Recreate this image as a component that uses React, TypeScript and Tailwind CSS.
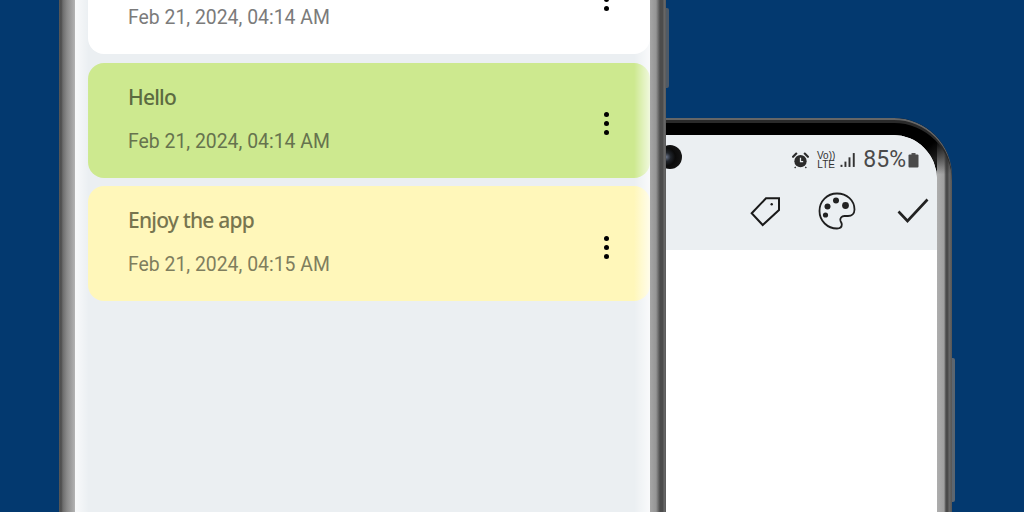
import React from "react";

function Kebab({ className }: { className: string }) {
  return (
    <div className={`flex w-[5px] flex-col gap-[4px] ${className}`}>
      <div className="h-[5px] w-[5px] rounded-full bg-black" />
      <div className="h-[5px] w-[5px] rounded-full bg-black" />
      <div className="h-[5px] w-[5px] rounded-full bg-black" />
    </div>
  );
}

function Card({ title, date, bg, titleCls, dateCls, className, kebab }: { title?: string; date: string; bg: string; titleCls: string; dateCls: string; className: string; kebab: string }) {
  return (
    <div className={`relative flex h-[115px] w-[562px] shrink-0 items-center justify-between rounded-[16px] pl-[40px] pr-[41px] ${bg} ${className}`}>
      <div className="flex flex-col pb-[4px]">
        <div className={`h-[28px] text-[21px] leading-[28px] font-medium tracking-[-0.8px] [font-family:'Noto_Sans',sans-serif] ${titleCls}`}>{title}</div>
        <div className={`mt-[19px] h-[24px] text-[19.4px] leading-[24px] [font-family:Roboto,sans-serif] ${dateCls}`}>{date}</div>
      </div>
      <Kebab className={kebab} />
    </div>
  );
}

function LeftPhone() {
  return (
    <div className="absolute left-[59px] top-[-120px] z-10 flex h-[760px] w-[607px] bg-[linear-gradient(90deg,#5a5a5a_0,#4c4c4c_2px,#6e6e6e_4px,#8a8a8a_8px,#a8a8a8_14px,#b4b4b4_16px,#b4b4b4_16px,#a6a6a6_591px,#959595_597px,#4c4c4c_601px,#4c4c4c_604px,#6a6a6a_605px,#5a5a5a_607px)] pl-[16px] pr-[16px]">
      <div className="relative flex h-full w-[575px] flex-col bg-[#ebeff2] pl-[13px] pt-[59px]">
        <Card date="Feb 21, 2024, 04:14 AM" bg="bg-white" titleCls="text-[#666]" dateCls="text-[#7b7b7b]" className="" kebab="mt-[6px]" />
        <Card title="Hello" date="Feb 21, 2024, 04:14 AM" bg="bg-[#cde98f]" titleCls="text-[#5c6b41]" dateCls="text-[#66734e]" className="mt-[9px]" kebab="mt-[6px]" />
        <Card title="Enjoy the app" date="Feb 21, 2024, 04:15 AM" bg="bg-[#fff7ba]" titleCls="text-[#77754f]" dateCls="text-[#7f7e5e]" className="mt-[8px]" kebab="mt-[7px]" />
        <div className="absolute inset-y-0 left-0 w-[14px] bg-[linear-gradient(90deg,rgba(255,255,255,0.65),rgba(255,255,255,0))]" />
        <div className="absolute inset-y-0 right-0 w-[16px] bg-[linear-gradient(270deg,rgba(255,255,255,0.7),rgba(255,255,255,0))]" />
      </div>
      <div className="absolute left-[607px] top-[128px] h-[80px] w-[3px] rounded-r-[2px] bg-[#4f5a66]" />
    </div>
  );
}

function Alarm() {
  return (
    <svg width="17" height="17" viewBox="0 0 16 16">
      <circle cx="8" cy="8.6" r="5.8" fill="#2b2b2b" />
      <path d="M1 4.5 L4 1.5 M15 4.5 L12 1.5" stroke="#2b2b2b" strokeWidth="2" strokeLinecap="round" />
      <path d="M3.5 14 L2.5 15 M12.5 14 L13.5 15" stroke="#2b2b2b" strokeWidth="1.3" />
      <path d="M8 5.5 V9 H10.5" stroke="#eaeef1" strokeWidth="1.2" fill="none" />
    </svg>
  );
}

function Signal() {
  return (
    <svg width="16" height="16" viewBox="0 0 15 15" fill="#333">
      <rect x="0.5" y="12" width="1.8" height="2" />
      <rect x="4.2" y="9" width="1.8" height="5" />
      <rect x="8" y="5" width="1.8" height="9" />
      <rect x="12" y="1" width="1.8" height="13" />
    </svg>
  );
}

function Battery() {
  return (
    <svg width="11" height="15" viewBox="0 0 10 15">
      <rect x="3" y="0" width="4" height="2" fill="#555" />
      <rect x="0" y="1.5" width="10" height="13" rx="1" fill="#4a4a4a" />
    </svg>
  );
}

function TagIcon() {
  return (
    <svg width="32" height="32" viewBox="0 0 32 32" fill="none" stroke="#1a1a1a" strokeWidth="2" strokeLinejoin="miter">
      <path d="M2.7 18.3 L17 3.3 L30 3.3 L30 15 L13.7 30 Z" />
      <circle cx="22.7" cy="9.3" r="1.2" fill="#1a1a1a" stroke="none" />
    </svg>
  );
}

function PaletteIcon() {
  return (
    <svg width="38" height="38" viewBox="0 0 38 38" fill="none">
      <path d="M19 1.5 C9 1.5 1.5 9.5 1.5 19 C1.5 29 9.5 36.5 19 36.5 C22 36.5 23.8 34.8 23.8 32.5 C23.8 31 23 30.2 22.5 29 C21.6 26.5 23.5 24 26.5 24 L30 24 C33.8 24 36.5 21.5 36.5 17.5 C36.5 8.5 29 1.5 19 1.5 Z" stroke="#1f1f1f" strokeWidth="1.8" />
      <circle cx="9.5" cy="14.5" r="3" fill="#222" />
      <circle cx="18" cy="8.5" r="3" fill="#222" />
      <circle cx="27.5" cy="13.5" r="3.4" fill="#222" />
      <circle cx="7.5" cy="23" r="2.6" fill="#222" />
    </svg>
  );
}

function CheckIcon() {
  return (
    <svg width="32" height="26" viewBox="0 0 32 26" fill="none">
      <path d="M1.5 13.5 L10.5 23 L30.5 1.5" stroke="#222" strokeWidth="2.6" />
    </svg>
  );
}

function RightPhone() {
  return (
    <div className="absolute left-[560px] top-[118px] h-[520px] w-[392px] rounded-tr-[58px] bg-[conic-gradient(from_0deg_at_333px_58px,#000_0deg,#000_50deg,rgba(40,40,40,0.7)_68deg,rgba(0,0,0,0)_88deg,rgba(0,0,0,0)_360deg),linear-gradient(90deg,#000_0,#000_377px,#adadad_377px,#a0a0a0_384px,#4a4a4a_386px,#4a4a4a_388px,#6a6a6a_389px,#555_392px)] pt-[17px] pr-[15px] shadow-[inset_0_2px_0_#666,inset_0_5px_0_#2a2a2a]">
      <div className="relative flex h-[503px] w-[377px] flex-col overflow-hidden rounded-tr-[44px] bg-white">
        <div className="flex h-[115px] w-full flex-col items-end bg-[#ebeff2]">
          <div className="mt-[14px] flex h-[22px] items-center pr-[18px]">
            <Alarm />
            <div className="ml-[8px] flex flex-col items-center text-[10px] leading-[9px] font-medium text-[#333] [font-family:'Liberation_Sans',sans-serif]">
              <span>Vo))</span>
              <span>LTE</span>
            </div>
            <div className="ml-[5px]"><Signal /></div>
            <div className="ml-[7px] text-[23px] leading-[22px] text-[#4a4a4a] [font-family:Roboto,sans-serif]">85%</div>
            <div className="ml-[2px]"><Battery /></div>
          </div>
          <div className="mt-[21px] flex items-center pr-[8px]">
            <TagIcon />
            <div className="ml-[37px]"><PaletteIcon /></div>
            <div className="ml-[41px]"><CheckIcon /></div>
          </div>
        </div>
        <div className="flex-1 bg-white" />
      </div>
      <div className="absolute left-[98px] top-[27px] h-[24px] w-[24px] rounded-full bg-[radial-gradient(circle_at_35%_50%,#6a7488_0,#20242a_22%,#0b0b0b_45%,#1c1c1c_100%)]" />
      <div className="absolute left-[392px] top-[240px] h-[144px] w-[3px] rounded-r-[2px] bg-[#5c6670]" />
    </div>
  );
}

export default function App() {
  return (
    <div className="relative h-[512px] w-[1024px] overflow-hidden bg-[#03396f]">
      <RightPhone />
      <LeftPhone />
    </div>
  );
}
